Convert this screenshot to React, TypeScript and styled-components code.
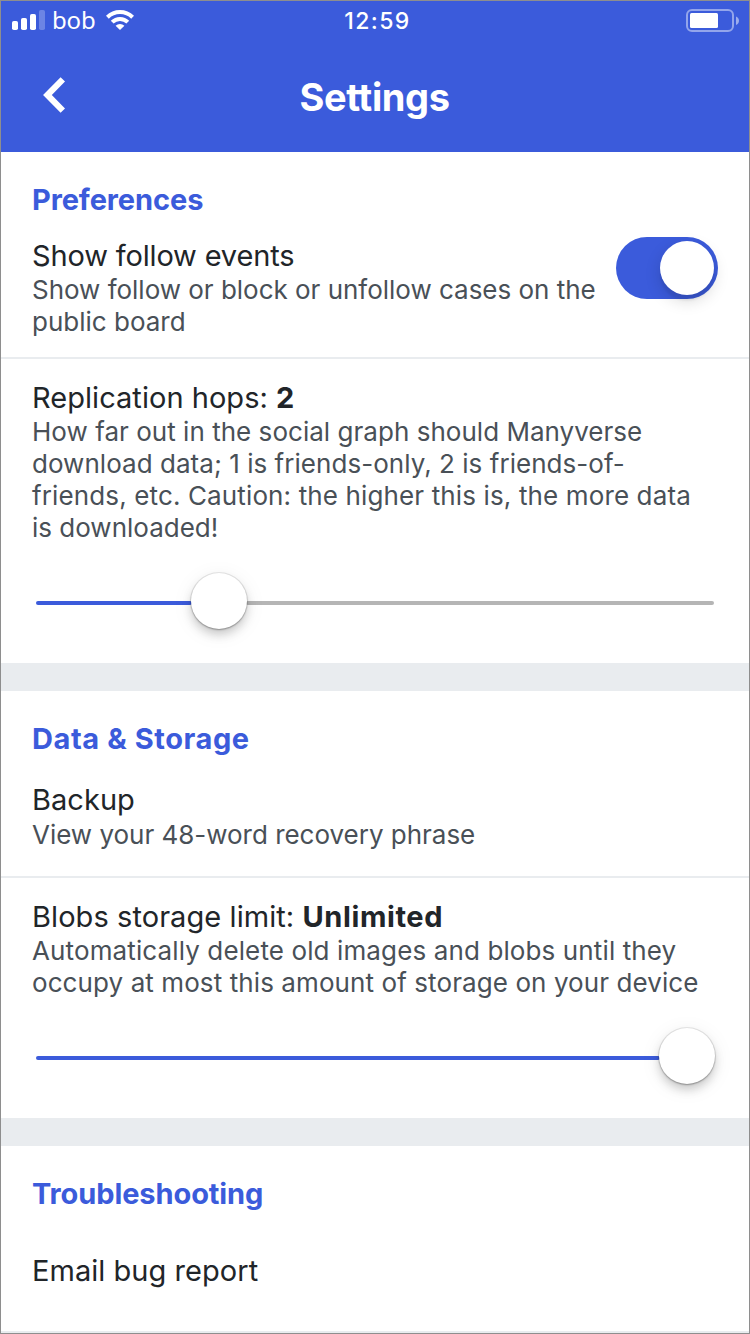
import React from "react";
import styled, { createGlobalStyle } from "styled-components";

const BLUE = "#3b5bdb";

const GlobalStyle = createGlobalStyle`
  *, *::before, *::after { box-sizing: border-box; }
  body {
    margin: 0;
    background: #fff;
    font-family: Inter, "Liberation Sans", sans-serif;
    -webkit-font-smoothing: antialiased;
  }
`;

const Screen = styled.div`
  display: flex;
  flex-direction: column;
  width: 750px;
  height: 1334px;
  overflow: hidden;
  border: 1px solid #8e8e8e;
  background: #fff;
`;

const Header = styled.header`
  flex: none;
  height: 151px;
  background: ${BLUE};
  color: #fff;
`;

const StatusBar = styled.div`
  display: grid;
  grid-template-columns: 1fr auto 1fr;
  align-items: center;
  height: 39px;
  padding: 0 10px 0 11px;
`;

const Carrier = styled.div`
  display: flex;
  align-items: center;
  padding-bottom: 1px;
  font-family: "Noto Sans", sans-serif;
  font-size: 24px;
  line-height: 36px;
  gap: 7px;
`;

const CarrierName = styled.span`
  padding-bottom: 1px;
  margin-right: 4px;
  letter-spacing: -0.2px;
`;

const Clock = styled.div`
  padding-left: 4px;
  font-size: 23px;
  font-weight: 500;
  letter-spacing: 1.4px;
`;

const BatterySlot = styled.div`
  display: flex;
  justify-content: flex-end;
`;

const NavBar = styled.div`
  display: grid;
  grid-template-columns: 60px 1fr 60px;
  align-items: center;
  height: 112px;
  padding: 0 24px;
`;

const BackButton = styled.button`
  display: flex;
  width: 60px;
  height: 60px;
  padding: 10px 0 0 17px;
  border: 0;
  background: none;
  color: inherit;
`;

const PageTitle = styled.h1`
  margin: 0;
  padding: 2px 1px 0 0;
  text-align: center;
  font-size: 38px;
  line-height: 46px;
  font-weight: 700;
  letter-spacing: -0.4px;
`;

const Section = styled.section`
  flex: none;
  padding-top: 30px;
  & + & {
    border-top: 28px solid #e9ecef;
  }
`;

const SectionTitle = styled.h2<{ $gap: number; $spacing?: number }>`
  margin: 0 0 ${(p) => p.$gap}px;
  padding: 0 31px;
  color: ${BLUE};
  font-size: 29px;
  line-height: 36px;
  font-weight: 700;
  letter-spacing: ${(p) => p.$spacing ?? -0.1}px;
`;

const Row = styled.div<{ $top?: number; $bottom: number; $divider?: boolean }>`
  display: flex;
  justify-content: space-between;
  padding: ${(p) => p.$top ?? 0}px 31px ${(p) => p.$bottom}px;
  border-bottom: ${(p) => (p.$divider ? "2px solid #e9ecef" : "0")};
`;

const RowText = styled.div`
  white-space: nowrap;
`;

const Label = styled.div<{ $spacing?: number }>`
  color: #212529;
  font-size: 29px;
  line-height: 36px;
  letter-spacing: ${(p) => p.$spacing ?? 0.04}px;
`;

const Value = styled.strong`
  font-weight: 700;
  letter-spacing: 0.6px;
`;

const Description = styled.div<{ $top?: number }>`
  padding-top: ${(p) => p.$top ?? 0.2}px;
  color: #495057;
  font-size: 26px;
  line-height: 31.8px;
`;

const Line = styled.span<{ $spacing?: number }>`
  display: block;
  letter-spacing: ${(p) => p.$spacing ?? 0}px;
`;

const Switch = styled.div`
  display: flex;
  justify-content: flex-end;
  width: 102px;
  height: 62px;
  margin-top: -1px;
  padding: 4px;
  border-radius: 31px;
  background: ${BLUE};
`;

const SwitchKnob = styled.div`
  width: 54px;
  height: 54px;
  border-radius: 50%;
  background: #fff;
  box-shadow: 0 6px 16px rgba(0, 0, 0, 0.15), 0 6px 2px rgba(0, 0, 0, 0.05);
`;

const SliderRow = styled.div<{ $top: number }>`
  display: flex;
  align-items: center;
  height: 57px;
  margin: ${(p) => p.$top}px 35px 33px;
`;

const Track = styled.div<{ $width?: number; $color: string }>`
  flex: ${(p) => (p.$width ? `0 0 ${p.$width}px` : "1")};
  height: 4px;
  margin-top: 3px;
  border-radius: 2px;
  background: ${(p) => p.$color};
`;

const Thumb = styled.div`
  flex: none;
  width: 56px;
  height: 56px;
  margin: 0 -1px;
  border-radius: 50%;
  background: #fff;
  z-index: 1;
  box-shadow: 0 0 0 1px rgba(0, 0, 0, 0.08), 0 1px 2px rgba(0, 0, 0, 0.28),
    0 6px 10px rgba(0, 0, 0, 0.17), 0 4px 22px rgba(0, 0, 0, 0.07);
`;

const SignalIcon = () => (
  <svg width="33" height="20" viewBox="0 0 33 20" fill="#fff">
    <rect x="0" y="11" width="6" height="9" rx="1.8" />
    <rect x="9" y="8" width="6" height="12" rx="1.8" />
    <rect x="18" y="4" width="6" height="16" rx="1.8" />
    <rect x="27" y="0" width="6" height="20" rx="1.8" opacity="0.25" />
  </svg>
);

const WifiIcon = () => (
  <svg width="28" height="20" viewBox="0 0 28 20">
    <g fill="none" stroke="#fff" strokeWidth="4">
      <path d="M1.400 7.200a18 18 0 0 1 25.200 0" />
      <path d="M6.200 12.200a11 11 0 0 1 15.600 0" />
    </g>
    <path d="M9.600 15.800a6.200 6.200 0 0 1 8.800 0L14 20Z" fill="#fff" />
  </svg>
);

const BatteryIcon = () => (
  <svg width="53" height="23" viewBox="0 0 53 23">
    <rect x="1" y="1" width="46" height="21" rx="5" fill="none" stroke="#fff" strokeOpacity="0.45" strokeWidth="2" />
    <rect x="4" y="4" width="28" height="15" rx="1.5" fill="#fff" />
    <path d="M50 7.500c4 1.500 4 7 0 8.500Z" fill="#fff" fillOpacity="0.5" />
  </svg>
);

const ChevronIcon = () => (
  <svg width="24" height="38" viewBox="0 0 24 38">
    <path d="M20.800 3.300 5.400 19 20.800 34.700" fill="none" stroke="#fff" strokeWidth="6.200" />
  </svg>
);

export default function App() {
  return (
    <Screen>
      <GlobalStyle />
      <Header>
        <StatusBar>
          <Carrier>
            <SignalIcon />
            <CarrierName>bob</CarrierName>
            <WifiIcon />
          </Carrier>
          <Clock>12:59</Clock>
          <BatterySlot>
            <BatteryIcon />
          </BatterySlot>
        </StatusBar>
        <NavBar>
          <BackButton aria-label="Back">
            <ChevronIcon />
          </BackButton>
          <PageTitle>Settings</PageTitle>
        </NavBar>
      </Header>

      <Section>
        <SectionTitle $gap={20}>Preferences</SectionTitle>
        <Row $bottom={19.2} $divider>
          <RowText>
            <Label $spacing={-0.16}>Show follow events</Label>
            <Description>
              <Line $spacing={-0.02}>Show follow or block or unfollow cases on the</Line>
              <Line>public board</Line>
            </Description>
          </RowText>
          <Switch role="switch" aria-checked="true">
            <SwitchKnob />
          </Switch>
        </Row>
        <Row $top={21} $bottom={0}>
          <RowText>
            <Label>
              Replication hops: <Value>2</Value>
            </Label>
            <Description $top={0.5}>
              <Line $spacing={0.03}>How far out in the social graph should Manyverse</Line>
              <Line $spacing={0.04}>download data; 1 is friends-only, 2 is friends-of-</Line>
              <Line $spacing={0.13}>friends, etc. Caution: the higher this is, the more data</Line>
              <Line>is downloaded!</Line>
            </Description>
          </RowText>
        </Row>
        <SliderRow $top={29.3}>
          <Track $width={156} $color={BLUE} />
          <Thumb />
          <Track $color="#b5b5b5" />
        </SliderRow>
      </Section>

      <Section>
        <SectionTitle $gap={25} $spacing={0.58}>
          Data &amp; Storage
        </SectionTitle>
        <Row $bottom={25} $divider>
          <RowText>
            <Label>Backup</Label>
            <Description $top={1.2}>
              <Line $spacing={-0.02}>View your 48-word recovery phrase</Line>
            </Description>
          </RowText>
        </Row>
        <Row $top={21} $bottom={0}>
          <RowText>
            <Label $spacing={0.07}>
              Blobs storage limit: <Value>Unlimited</Value>
            </Label>
            <Description>
              <Line $spacing={0.12}>Automatically delete old images and blobs until they</Line>
              <Line $spacing={0.09}>occupy at most this amount of storage on your device</Line>
            </Description>
          </RowText>
        </Row>
        <SliderRow $top={29.2}>
          <Track $color={BLUE} />
          <Thumb />
        </SliderRow>
      </Section>

      <Section>
        <SectionTitle $gap={41}>Troubleshooting</SectionTitle>
        <Row $bottom={42} $divider>
          <RowText>
            <Label>Email bug report</Label>
          </RowText>
        </Row>
      </Section>
    </Screen>
  );
}
